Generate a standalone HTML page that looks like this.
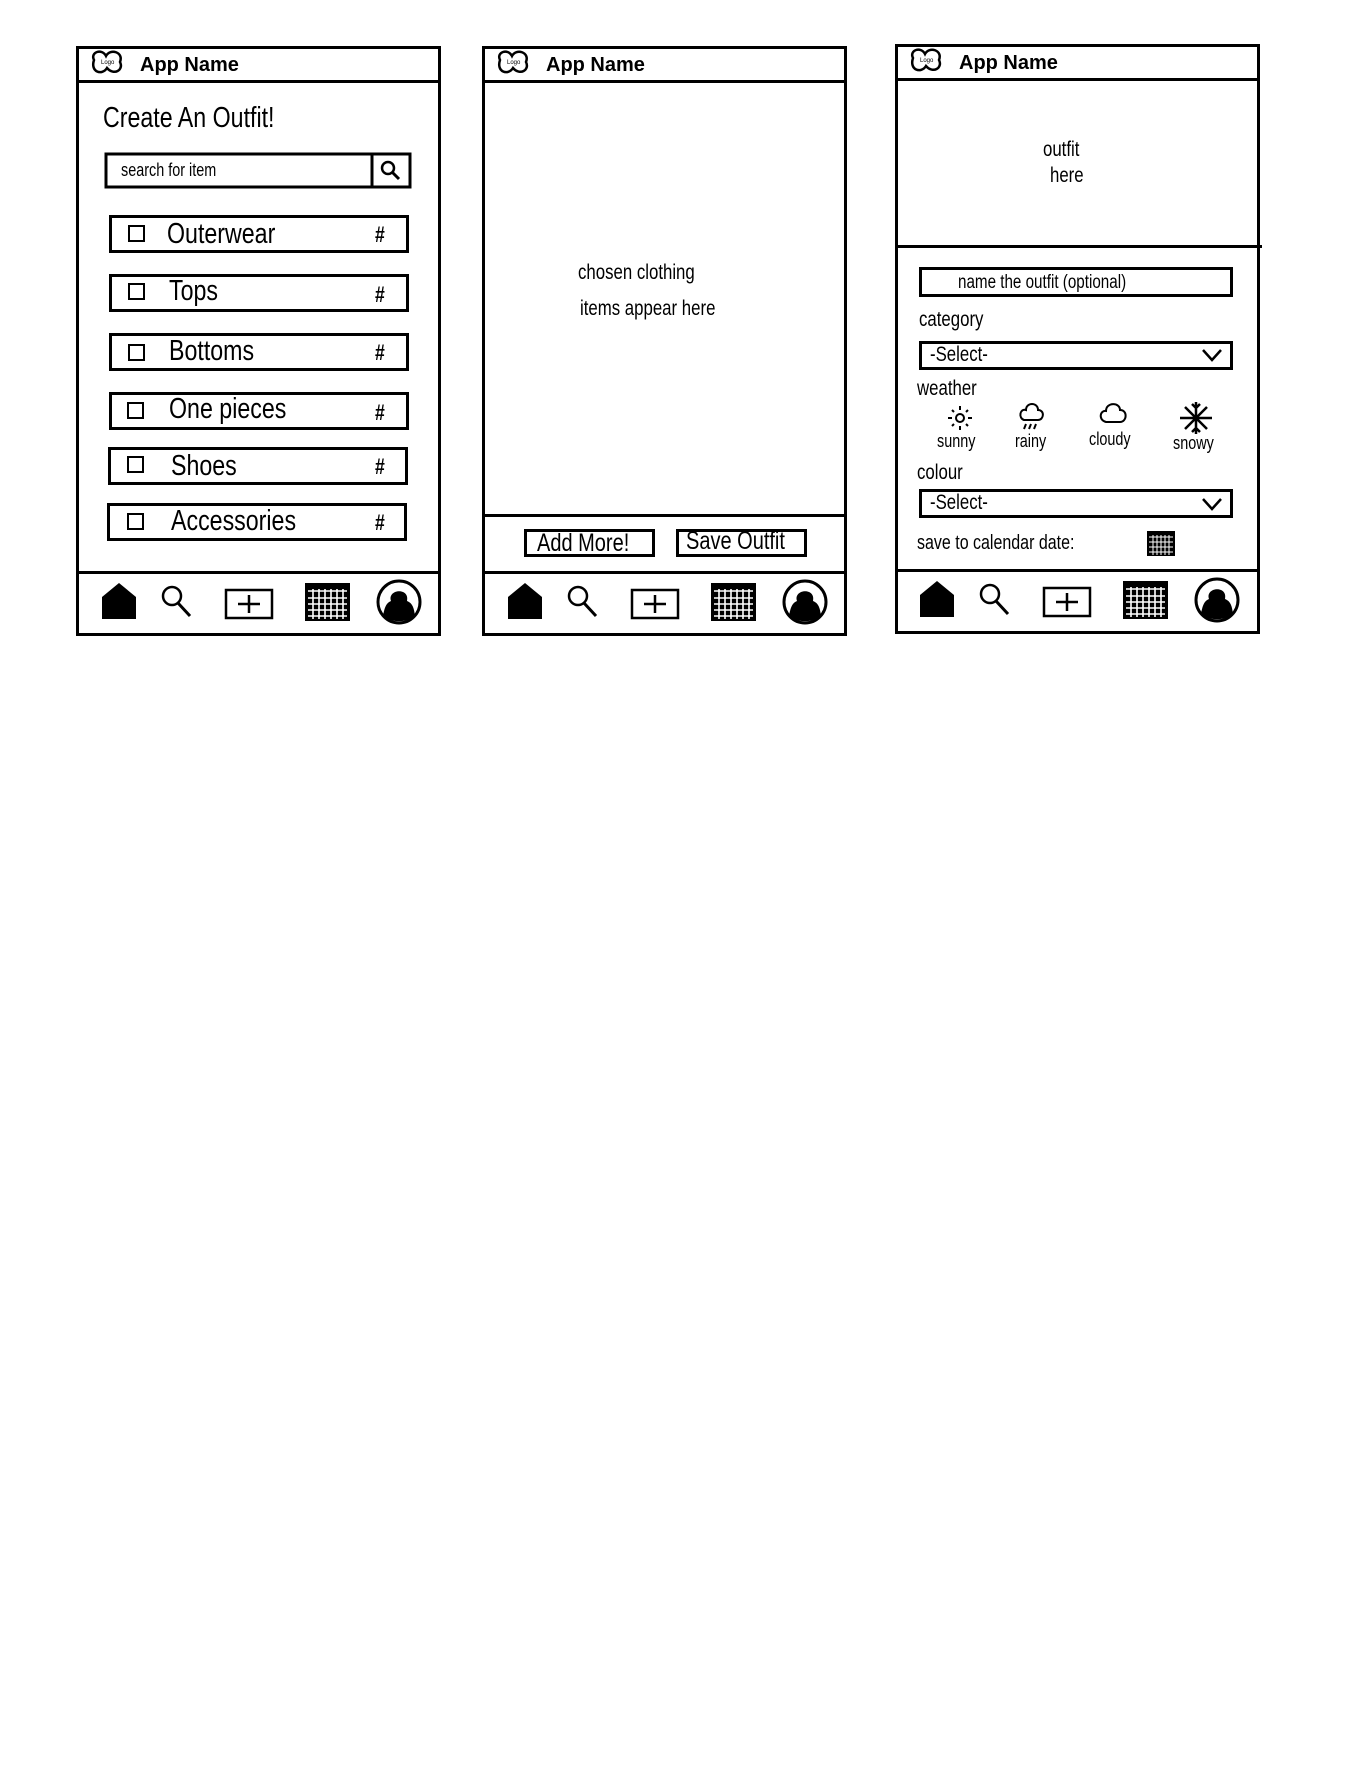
<!DOCTYPE html>
<html><head><meta charset="utf-8"><style>
body{margin:0;width:1364px;height:1765px;background:#fff;position:relative;overflow:hidden;font-family:"Liberation Sans",sans-serif;color:#000}
.a{position:absolute;box-sizing:border-box}
.f{border:3px solid #000}
.h{height:3px;background:#000}
.t{position:absolute;white-space:nowrap;line-height:1;transform:scaleX(.8);transform-origin:0 0}
.b{border:3px solid #000}
.cb{position:absolute;width:17px;height:17px;border:2.5px solid #000;box-sizing:border-box}
</style></head><body>

<div class="a f" style="left:76px;top:46px;width:365px;height:590px"></div>
<div class="a h" style="left:78px;top:80px;width:360px"></div>
<div class="a h" style="left:78px;top:571px;width:360px"></div>

<div class="a f" style="left:482px;top:46px;width:365px;height:590px"></div>
<div class="a h" style="left:484px;top:80px;width:360px"></div>
<div class="a h" style="left:484px;top:514px;width:360px"></div>
<div class="a h" style="left:484px;top:571px;width:360px"></div>

<div class="a f" style="left:895px;top:44px;width:365px;height:590px"></div>
<div class="a h" style="left:897px;top:78px;width:360px"></div>
<div class="a h" style="left:895px;top:245px;width:367px"></div>
<div class="a h" style="left:897px;top:569px;width:360px"></div>

<svg class="a" style="left:0;top:0" width="1364" height="700" xmlns="http://www.w3.org/2000/svg">
<defs>
<g id="hdr">
 <path d="M4 10 C0 2 12 -2 16 6 C20 -2 34 2 30 12 C34 20 24 26 17 18 C12 26 0 22 4 10 Z" fill="none" stroke="#000" stroke-width="2.5"/>
 <text x="11" y="14" font-size="6" font-family="Liberation Sans">Logo</text>
 <text x="50" y="21" font-size="20" font-weight="bold" font-family="Liberation Sans">App  Name</text>
</g>
<g id="nav">
 <path d="M0 36 V14 L17 0 L34 14 V36 Z" fill="#000"/>
 <circle cx="70" cy="13" r="9" fill="none" stroke="#000" stroke-width="2.5"/>
 <path d="M76 20 L88 33" stroke="#000" stroke-width="3"/>
 <rect x="124" y="7" width="46" height="28" fill="none" stroke="#000" stroke-width="2.5"/>
 <path d="M147 12 V30 M136 21 H158" stroke="#000" stroke-width="2.5"/>
 <rect x="203" y="0" width="45" height="38" fill="#000"/>
 <path d="M206 8 H245 M206 15 H245 M206 21 H245 M206 27 H245 M206 33 H245 M211 6 V36 M217 6 V36 M223 6 V36 M229 6 V36 M235 6 V36 M241 6 V36" stroke="#fff" stroke-width="1.6"/>
 <circle cx="297" cy="19" r="21" fill="none" stroke="#000" stroke-width="3"/>
 <path d="M281 33 C283 22 285 20 289 18 C285 6 308 4 305 18 C310 20 312 24 313 33 C304 40 290 40 281 33 Z" fill="#000"/>
</g>
</defs>
<use href="#hdr" x="90" y="50"/>
<use href="#hdr" x="496" y="50"/>
<use href="#hdr" x="909" y="48"/>
<use href="#nav" x="102" y="583"/>
<use href="#nav" x="508" y="583"/>
<use href="#nav" x="920" y="581"/>

<rect x="106" y="154" width="304" height="33" fill="none" stroke="#000" stroke-width="3"/>
<line x1="372" y1="154" x2="372" y2="187" stroke="#000" stroke-width="3"/>
<circle cx="388" cy="168" r="6" fill="none" stroke="#000" stroke-width="2.5"/>
<path d="M392 172 L399 179" stroke="#000" stroke-width="3"/>

<g stroke="#000" stroke-width="2" fill="none">
 <circle cx="960" cy="418" r="4"/>
 <path d="M960 406 V410 M960 426 V430 M948 418 H952 M968 418 H972 M952 410 L954 412 M966 424 L968 426 M952 426 L954 424 M966 412 L968 410"/>
 <path d="M1024 420 C1018 418 1020 408 1026 410 C1026 402 1038 402 1038 410 C1045 410 1044 420 1038 420 Z"/>
 <path d="M1026 424 L1024 429 M1031 424 L1029 429 M1036 424 L1034 429"/>
 <path d="M1106 422 C1098 420 1100 410 1106 411 C1106 402 1120 402 1120 410 C1128 410 1127 422 1120 422 Z"/>
 <path d="M1196 402 V434 M1180 418 H1212 M1185 407 L1207 429 M1185 429 L1207 407 M1192 404 L1196 408 L1200 404 M1192 432 L1196 428 L1200 432" stroke-width="2.5"/>
</g>
<rect x="1147" y="531" width="28" height="25" fill="#000"/>
<path d="M1149 537 H1173 M1149 542 H1173 M1149 547 H1173 M1149 552 H1173 M1153 535 V555 M1157 535 V555 M1161 535 V555 M1165 535 V555 M1169 535 V555" stroke="#fff" stroke-width="1"/>
<path d="M1203 350 L1212 360 L1221 350" fill="none" stroke="#000" stroke-width="2.5"/>
<path d="M1203 499 L1212 509 L1221 499" fill="none" stroke="#000" stroke-width="2.5"/>
</svg>

<div class="t" style="left:103px;top:104px;font-size:29px">Create An Outfit!</div>
<div class="t" style="left:121px;top:161px;font-size:18px">search for item</div>

<div class="a b" style="left:109px;top:215px;width:300px;height:38px"></div>
<div class="a b" style="left:109px;top:274px;width:300px;height:38px"></div>
<div class="a b" style="left:109px;top:333px;width:300px;height:38px"></div>
<div class="a b" style="left:109px;top:392px;width:300px;height:38px"></div>
<div class="a b" style="left:108px;top:447px;width:300px;height:38px"></div>
<div class="a b" style="left:107px;top:503px;width:300px;height:38px"></div>

<div class="cb" style="left:128px;top:225px"></div>
<div class="cb" style="left:128px;top:283px"></div>
<div class="cb" style="left:128px;top:344px"></div>
<div class="cb" style="left:127px;top:402px"></div>
<div class="cb" style="left:127px;top:456px"></div>
<div class="cb" style="left:127px;top:513px"></div>

<div class="t" style="left:167px;top:220px;font-size:29px">Outerwear</div>
<div class="t" style="left:169px;top:277px;font-size:29px">Tops</div>
<div class="t" style="left:169px;top:337px;font-size:29px">Bottoms</div>
<div class="t" style="left:169px;top:395px;font-size:29px">One pieces</div>
<div class="t" style="left:171px;top:452px;font-size:29px">Shoes</div>
<div class="t" style="left:171px;top:507px;font-size:29px">Accessories</div>
<div class="t" style="left:375px;top:224px;font-size:22px;font-weight:bold">#</div>
<div class="t" style="left:375px;top:284px;font-size:22px;font-weight:bold">#</div>
<div class="t" style="left:375px;top:342px;font-size:22px;font-weight:bold">#</div>
<div class="t" style="left:375px;top:402px;font-size:22px;font-weight:bold">#</div>
<div class="t" style="left:375px;top:456px;font-size:22px;font-weight:bold">#</div>
<div class="t" style="left:375px;top:512px;font-size:22px;font-weight:bold">#</div>

<div class="t" style="left:578px;top:262px;font-size:21px">chosen clothing</div>
<div class="t" style="left:580px;top:298px;font-size:21px">items appear here</div>
<div class="a b" style="left:524px;top:529px;width:131px;height:28px"></div>
<div class="a b" style="left:676px;top:529px;width:131px;height:28px"></div>
<div class="t" style="left:537px;top:531px;font-size:25px">Add More!</div>
<div class="t" style="left:686px;top:529px;font-size:25px">Save Outfit</div>

<div class="t" style="left:1043px;top:139px;font-size:21px">outfit</div>
<div class="t" style="left:1050px;top:165px;font-size:21px">here</div>
<div class="a b" style="left:919px;top:267px;width:314px;height:30px"></div>
<div class="t" style="left:958px;top:273px;font-size:19px">name the outfit (optional)</div>
<div class="t" style="left:919px;top:309px;font-size:21px">category</div>
<div class="a b" style="left:919px;top:341px;width:314px;height:29px"></div>
<div class="t" style="left:930px;top:344px;font-size:21px">-Select-</div>
<div class="t" style="left:917px;top:378px;font-size:21px">weather</div>
<div class="t" style="left:937px;top:432px;font-size:18px">sunny</div>
<div class="t" style="left:1015px;top:432px;font-size:18px">rainy</div>
<div class="t" style="left:1089px;top:430px;font-size:18px">cloudy</div>
<div class="t" style="left:1173px;top:434px;font-size:18px">snowy</div>
<div class="t" style="left:917px;top:462px;font-size:21px">colour</div>
<div class="a b" style="left:919px;top:489px;width:314px;height:29px"></div>
<div class="t" style="left:930px;top:492px;font-size:21px">-Select-</div>
<div class="t" style="left:917px;top:533px;font-size:20px">save to calendar date:</div>
</body></html>
